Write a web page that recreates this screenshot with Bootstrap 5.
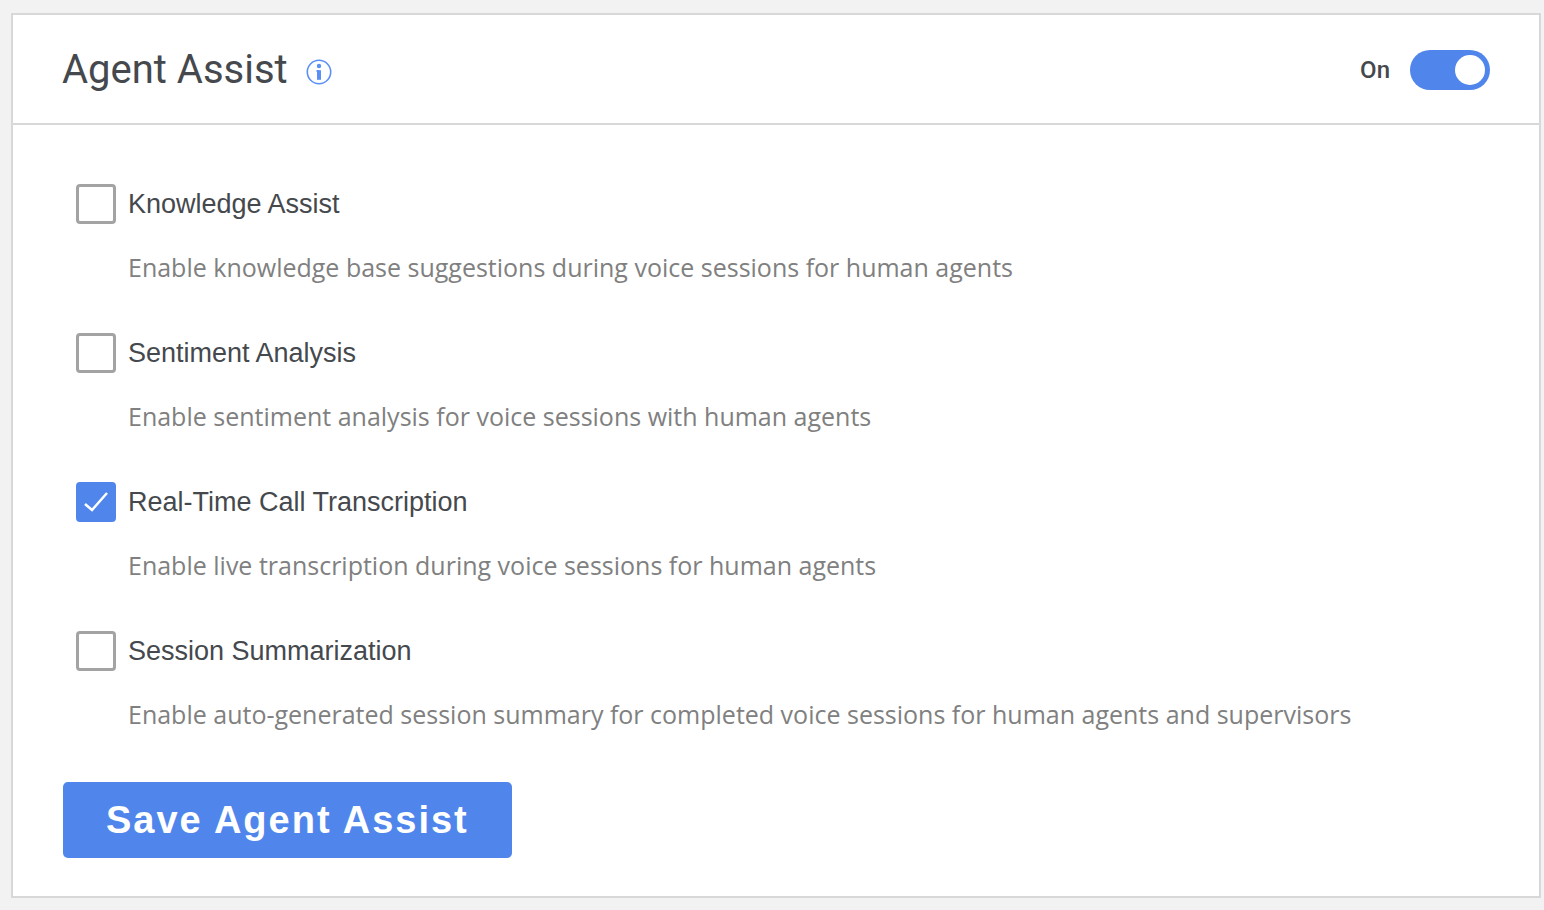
<!DOCTYPE html>
<html lang="en">
<head>
<meta charset="utf-8">
<meta name="viewport" content="width=device-width, initial-scale=1">
<title>Agent Assist</title>
<link href="https://cdn.jsdelivr.net/npm/bootstrap@5.3.0/dist/css/bootstrap.min.css" rel="stylesheet">
<style>
  body { background: #f2f2f2; color: #45494d; font-family: "Liberation Sans", Arial, sans-serif; padding: 13px 3px 11px 11px; }
  .panel { border: 2px solid #d8d8d8; border-radius: 0; }
  .panel-top { height: 110px; padding: 2px 49px 0; background: #fff; border-bottom: 2px solid #d8d8d8; }
  .title-group { gap: 18px; }
  .panel-title { font: 400 40px/48px Roboto, sans-serif; color: #45494d; }
  .info-btn { width: 26px; height: 26px; margin-top: 4px; color: #5a90f5; }
  .switch-group { gap: 20px; }
  .switch-label { font: 500 24px/32px Roboto, sans-serif; }
  .form-switch .form-check-input.toggle { width: 80px; height: 40px; margin: 0; border: 0; background-color: #5086ec; background-size: 40px 40px; }
  .options { padding: 59px 49px 0 63px; }
  .option { margin-bottom: 49px; }
  .option-head { gap: 12px; }
  .form-check-input.tick { width: 40px; height: 40px; margin: 0; border: 3px solid #a3a3a3; border-radius: 4px; }
  .form-check-input.tick:checked { background-color: #5086ec; border-color: #5086ec; background-image: url("data:image/svg+xml,%3Csvg xmlns='http://www.w3.org/2000/svg' viewBox='0 0 34 34'%3E%3Cpath d='M6 19l7 6L28 8' fill='none' stroke='%23fff' stroke-width='2.5'/%3E%3C/svg%3E"); }
  .option-label { font-size: 27px; line-height: 40px; }
  .option-note { font: 400 25px/34px "Open Sans", "Noto Sans", sans-serif; color: #808080; margin: 26px 0 0 52px; }
  .save-btn { margin: 2px 0 38px 50px; padding: 0 43px; height: 76px; border: 0; border-radius: 5px; background: #5086ec; color: #fff; font-size: 38px; font-weight: 700; letter-spacing: 2px; }
</style>
</head>
<body>
<main class="card panel">
  <header class="card-header panel-top d-flex align-items-center justify-content-between">
    <div class="d-flex align-items-center title-group">
      <h1 class="panel-title mb-0">Agent Assist</h1>
      <button type="button" class="btn p-0 border-0 d-flex info-btn" aria-label="About Agent Assist">
        <svg viewBox="0 0 26 26" width="26" height="26" fill="none" stroke="currentColor"><circle cx="13" cy="13" r="11.7" stroke-width="1.6"/><path d="M10.5 12h2.500" stroke-width="1.8"/><path d="M13 11.200V20.800" stroke-width="4"/><circle cx="13" cy="7" r="2.200" fill="currentColor" stroke="none"/></svg>
      </button>
    </div>
    <div class="form-check form-switch d-flex align-items-center p-0 m-0 switch-group">
      <label class="switch-label" for="assist">On</label>
      <input class="form-check-input toggle" type="checkbox" role="switch" id="assist" checked>
    </div>
  </header>
  <form>
    <div class="options">
      <div class="option">
        <div class="d-flex align-items-center option-head"><input class="form-check-input tick" type="checkbox" id="knowledge"><label class="option-label" for="knowledge">Knowledge Assist</label></div>
        <p class="option-note">Enable knowledge base suggestions during voice sessions for human agents</p>
      </div>
      <div class="option">
        <div class="d-flex align-items-center option-head"><input class="form-check-input tick" type="checkbox" id="sentiment"><label class="option-label" for="sentiment">Sentiment Analysis</label></div>
        <p class="option-note">Enable sentiment analysis for voice sessions with human agents</p>
      </div>
      <div class="option">
        <div class="d-flex align-items-center option-head"><input class="form-check-input tick" type="checkbox" id="transcription" checked><label class="option-label" for="transcription">Real-Time Call Transcription</label></div>
        <p class="option-note">Enable live transcription during voice sessions for human agents</p>
      </div>
      <div class="option">
        <div class="d-flex align-items-center option-head"><input class="form-check-input tick" type="checkbox" id="summary"><label class="option-label" for="summary">Session Summarization</label></div>
        <p class="option-note">Enable auto-generated session summary for completed voice sessions for human agents and supervisors</p>
      </div>
    </div>
    <button type="button" class="btn save-btn">Save Agent Assist</button>
  </form>
</main>
<script src="https://cdn.jsdelivr.net/npm/bootstrap@5.3.0/dist/js/bootstrap.bundle.min.js"></script>
</body>
</html>
